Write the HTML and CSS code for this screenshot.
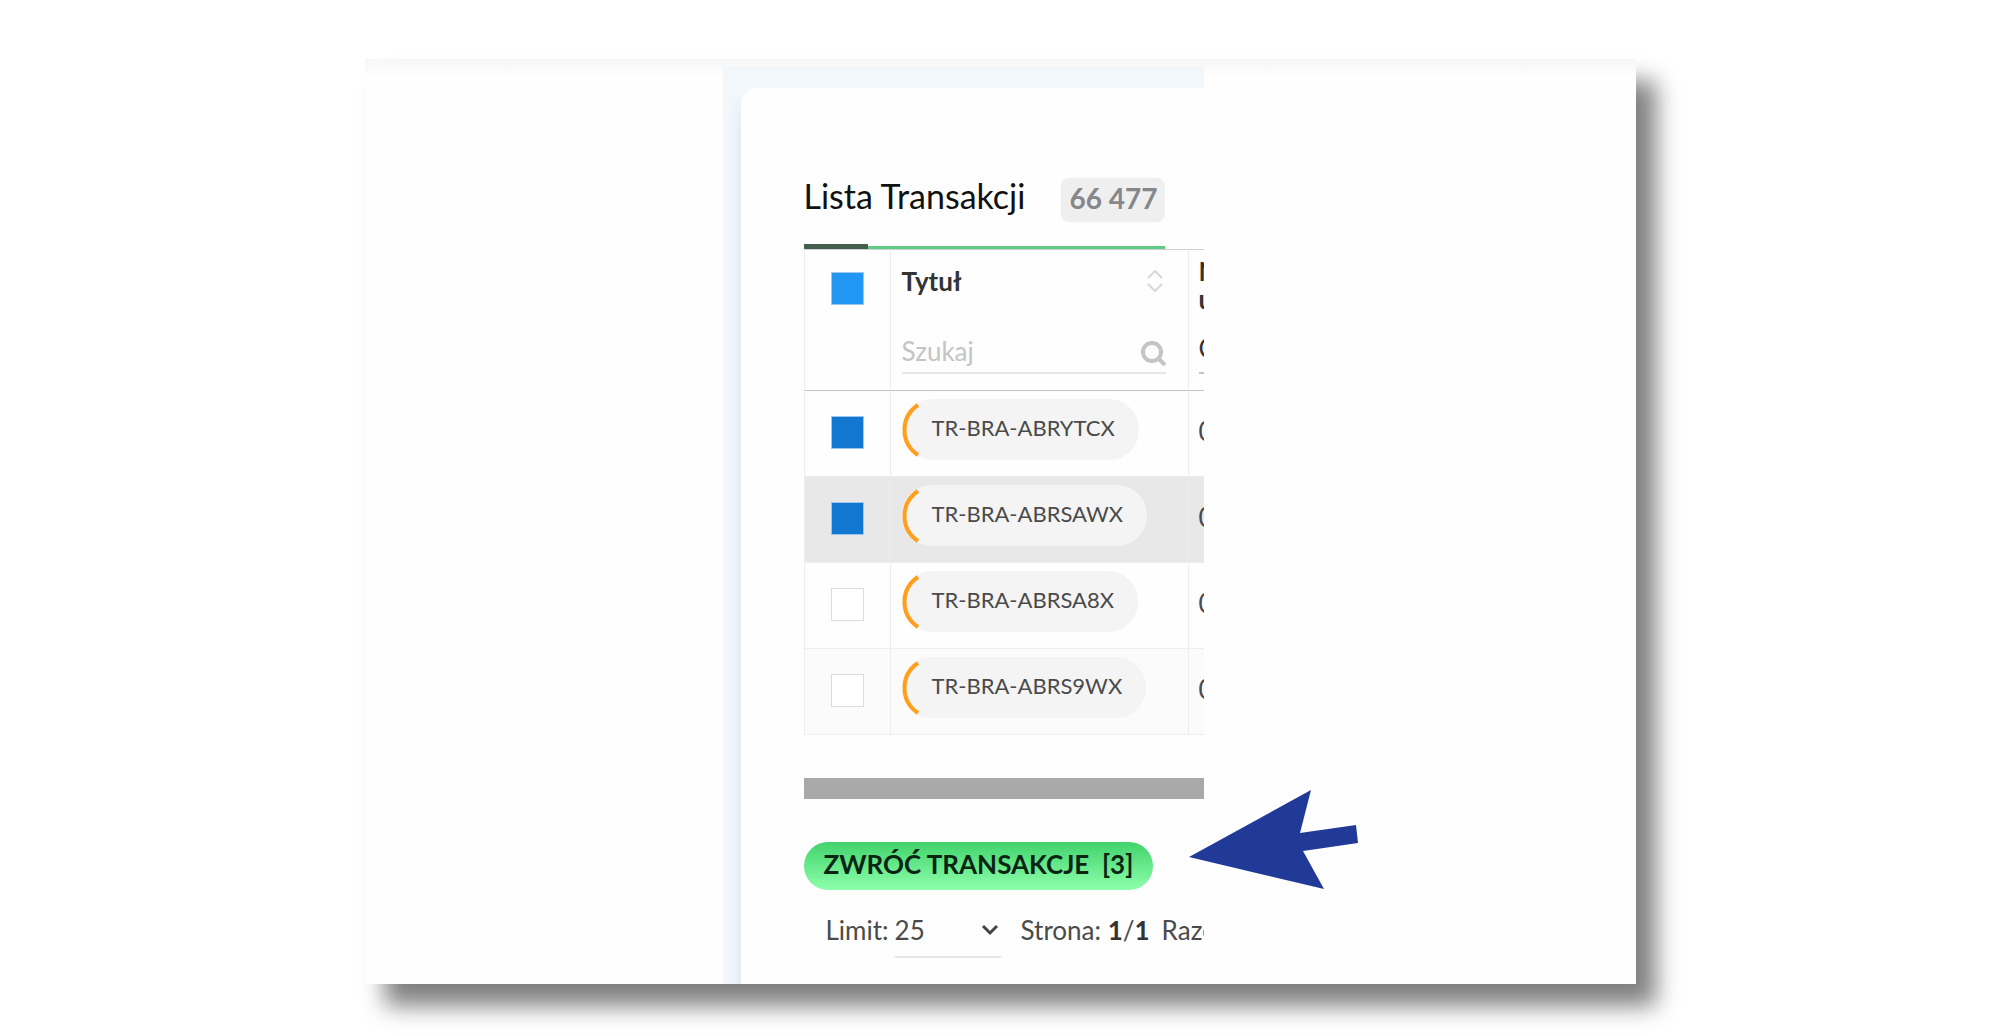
FILE: index.html
```html
<!DOCTYPE html>
<html lang="pl">
<head>
    <meta charset="UTF-8">
    <meta name="viewport" content="width=device-width, initial-scale=1.0">
    <title>Lista Transakcji</title>
    <link rel="stylesheet" href="styles.css">
</head>
<body>
    <div class="frame">
        <div class="panel">
            <main class="card">
                <header class="heading">
                    <h1>Lista Transakcji</h1>
                    <span class="badge">66 477</span>
                </header>
                <div class="tabs-line"><span class="line-dark"></span><span class="line-green"></span></div>
                <table>
                    <colgroup>
                        <col class="col-check">
                        <col class="col-title">
                        <col class="col-user">
                    </colgroup>
                    <thead>
                        <tr>
                            <th class="check"><input type="checkbox" class="all" aria-label="Zaznacz wszystkie" checked></th>
                            <th>
                                <div class="th-title">
                                    <span>Tytuł</span>
                                    <svg class="sort" width="16" height="24" viewBox="0 0 16 24"><path d="M1 9L8 2L15 9M1 15L8 22L15 15"/></svg>
                                </div>
                                <div class="search">
                                    <input type="text" placeholder="Szukaj" aria-label="Szukaj">
                                    <svg class="lens" width="25" height="25" viewBox="0 0 25 25"><circle cx="11" cy="11" r="9"/><path d="M17 17L24 24"/></svg>
                                </div>
                            </th>
                            <th class="user">
                                <div class="user-title">N<br>u</div>
                                <div class="user-filter">C</div>
                            </th>
                        </tr>
                    </thead>
                    <tbody>
                        <tr>
                            <td class="check"><input type="checkbox" aria-label="TR-BRA-ABRYTCX" checked></td>
                            <td><span class="pill"><svg width="18" height="54" viewBox="0 0 18 54"><path d="M16 2C-2 14-2 40 16 52"/></svg><span>TR-BRA-ABRYTCX</span></span></td>
                            <td class="user num">0</td>
                        </tr>
                        <tr class="active">
                            <td class="check"><input type="checkbox" aria-label="TR-BRA-ABRSAWX" checked></td>
                            <td><span class="pill"><svg width="18" height="54" viewBox="0 0 18 54"><path d="M16 2C-2 14-2 40 16 52"/></svg><span>TR-BRA-ABRSAWX</span></span></td>
                            <td class="user num">0</td>
                        </tr>
                        <tr>
                            <td class="check"><input type="checkbox" aria-label="TR-BRA-ABRSA8X"></td>
                            <td><span class="pill"><svg width="18" height="54" viewBox="0 0 18 54"><path d="M16 2C-2 14-2 40 16 52"/></svg><span>TR-BRA-ABRSA8X</span></span></td>
                            <td class="user num">0</td>
                        </tr>
                        <tr class="even">
                            <td class="check"><input type="checkbox" aria-label="TR-BRA-ABRS9WX"></td>
                            <td><span class="pill"><svg width="18" height="54" viewBox="0 0 18 54"><path d="M16 2C-2 14-2 40 16 52"/></svg><span>TR-BRA-ABRS9WX</span></span></td>
                            <td class="user num">0</td>
                        </tr>
                    </tbody>
                </table>
                <div class="scrollbar"></div>
                <button type="button" class="return">ZWRÓĆ TRANSAKCJE&nbsp; [3]</button>
                <footer class="pager">
                    <label for="limit">Limit:</label>
                    <div class="select">
                        <select id="limit"><option>25</option><option>50</option></select>
                        <svg width="18" height="12" viewBox="0 0 18 12"><path d="M2 2L9 9L16 2"/></svg>
                    </div>
                    <span class="page">Strona: <b>1</b>/<b>1</b></span>
                    <span>Razem</span>
                </footer>
            </main>
        </div>
        <svg class="arrow" width="170" height="100" viewBox="0 0 170 100"><path d="M0 67L122 0L111 43L167 35L169 53L114 61L135 99Z"/></svg>
    </div>
</body>
</html>
```

FILE: styles.css
```css
* {
    box-sizing: border-box;
}

body {
    margin: 0;
    background: #fff;
    font-family: Lato, sans-serif;
    font-size: 26px;
    line-height: 32px;
    color: #4a4a4a;
}

.frame {
    display: grid;
    grid-template-columns: 358fr 481fr 432fr;
    width: 64%;
    max-width: 1271px;
    margin: 59px auto 50px;
    background: linear-gradient(#f7f7f7, #fefefe 18px);
    box-shadow: 20px 22px 22px #808080;
}

.panel {
    grid-column: 2;
    overflow: hidden;
    margin-top: 7px;
    padding: 22px 0 0 18px;
    background: #f2f7fc;
}

.card {
    padding: 90px 0 26px 63px;
    border-top-left-radius: 16px;
    background: #fefefe;
    box-shadow: 0 16px 16px rgba(60, 80, 100, 0.12);
    white-space: nowrap;
}

.heading {
    display: flex;
    align-items: center;
    gap: 36px;
}

h1 {
    margin: 0;
    padding-bottom: 8px;
    font-size: 34px;
    line-height: 36px;
    font-weight: normal;
    color: #111;
}

.badge {
    padding: 4px 8px 8px;
    border-radius: 8px;
    background: #efefef;
    color: #85878b;
    font-size: 28px;
    font-weight: bold;
}

.tabs-line {
    display: flex;
    align-items: flex-end;
    margin-top: 22px;
}

.line-dark {
    width: 64px;
    height: 5px;
    background: #43604d;
}

.line-green {
    width: 297px;
    height: 3px;
    background: #62cb83;
}

table {
    width: 460px;
    table-layout: fixed;
    border-collapse: separate;
    border-spacing: 0;
    border-left: 1px solid #ededed;
}

.col-check {
    width: 86px;
}

.col-title {
    width: 298px;
}

th,
td {
    padding: 0 11px;
    border-right: 1px solid #ededed;
    text-align: left;
    vertical-align: top;
}

th {
    height: 142px;
    padding-top: 15px;
    border-top: 1px solid #d0d0d0;
    border-bottom: 1px solid #c4c4c4;
    color: #333;
}

td {
    height: 86px;
    padding-top: 8px;
    border-bottom: 1px solid #ededed;
}

.check {
    padding: 22px 0 0 26px;
}

td.check {
    padding-top: 25px;
}

.user {
    padding-left: 10px;
}

.active td {
    background: #e8e8e8;
}

.even td {
    background: #fbfbfb;
}

input[type="checkbox"] {
    appearance: none;
    display: block;
    width: 33px;
    height: 33px;
    margin: 0;
    border: 1px solid #dcdcdc;
    background: #fff;
}

input[type="checkbox"]:checked {
    border-color: #9cc6ee;
    background: #1177d1;
}

input.all:checked {
    background: #2196f3;
}

.th-title,
.search {
    display: flex;
    align-items: center;
    justify-content: space-between;
}

.th-title {
    padding-right: 14px;
}

.search {
    width: 264px;
    height: 48px;
    margin-top: 29px;
    padding-top: 4px;
    border-bottom: 2px solid #e6e6e6;
}

.search input {
    width: 200px;
    padding: 0;
    border: 0;
    background: none;
    font: inherit;
    font-weight: normal;
    outline: none;
}

.search input::placeholder {
    color: #c4c4c4;
}

svg path,
svg circle {
    fill: none;
}

.sort {
    stroke: #d8d8d8;
    stroke-width: 2;
}

.lens {
    margin-top: 4px;
    stroke: #c4c4c4;
    stroke-width: 4;
}

.user-title {
    margin-top: -8px;
    line-height: 28px;
}

.user-filter {
    height: 48px;
    margin-top: 13px;
    padding-top: 6px;
    border-bottom: 2px solid #c4c4c4;
    font-weight: normal;
}

.pill {
    display: inline-flex;
    align-items: center;
    gap: 12px;
    height: 61px;
    padding-right: 24px;
    border-radius: 30px;
    background: #f4f4f4;
    font-size: 22px;
}

.pill span {
    padding-bottom: 4px;
}

.pill path {
    stroke: #ff9f1c;
    stroke-width: 4;
}

.num {
    padding-top: 24px;
}

.scrollbar {
    height: 21px;
    margin-top: 43px;
    background: #a9a9a9;
}

.return {
    display: block;
    height: 48px;
    margin-top: 43px;
    padding: 0 20px 4px;
    border: 0;
    border-radius: 24px;
    background: linear-gradient(#41d36c, #8dffab);
    color: #0c2413;
    font-family: inherit;
    font-size: 26px;
    font-weight: bold;
}

.pager {
    display: flex;
    padding: 24px 0 0 22px;
}

.select {
    display: flex;
    flex-shrink: 0;
    align-items: center;
    width: 106px;
    height: 44px;
    margin: 0 20px 0 6px;
    padding: 0 2px 10px 0;
    border-bottom: 2px solid #e6e6e6;
}

select {
    flex: 1;
    appearance: none;
    padding: 0;
    border: 0;
    background: none;
    color: inherit;
    font: inherit;
    outline: none;
}

.select path {
    stroke: #444;
    stroke-width: 3;
}

.page {
    margin-right: 12px;
}

.page b {
    color: #333;
}

.arrow {
    grid-column: 3;
    align-self: end;
    margin: 0 0 94px -15px;
}

.arrow path {
    fill: #213a97;
}
```
